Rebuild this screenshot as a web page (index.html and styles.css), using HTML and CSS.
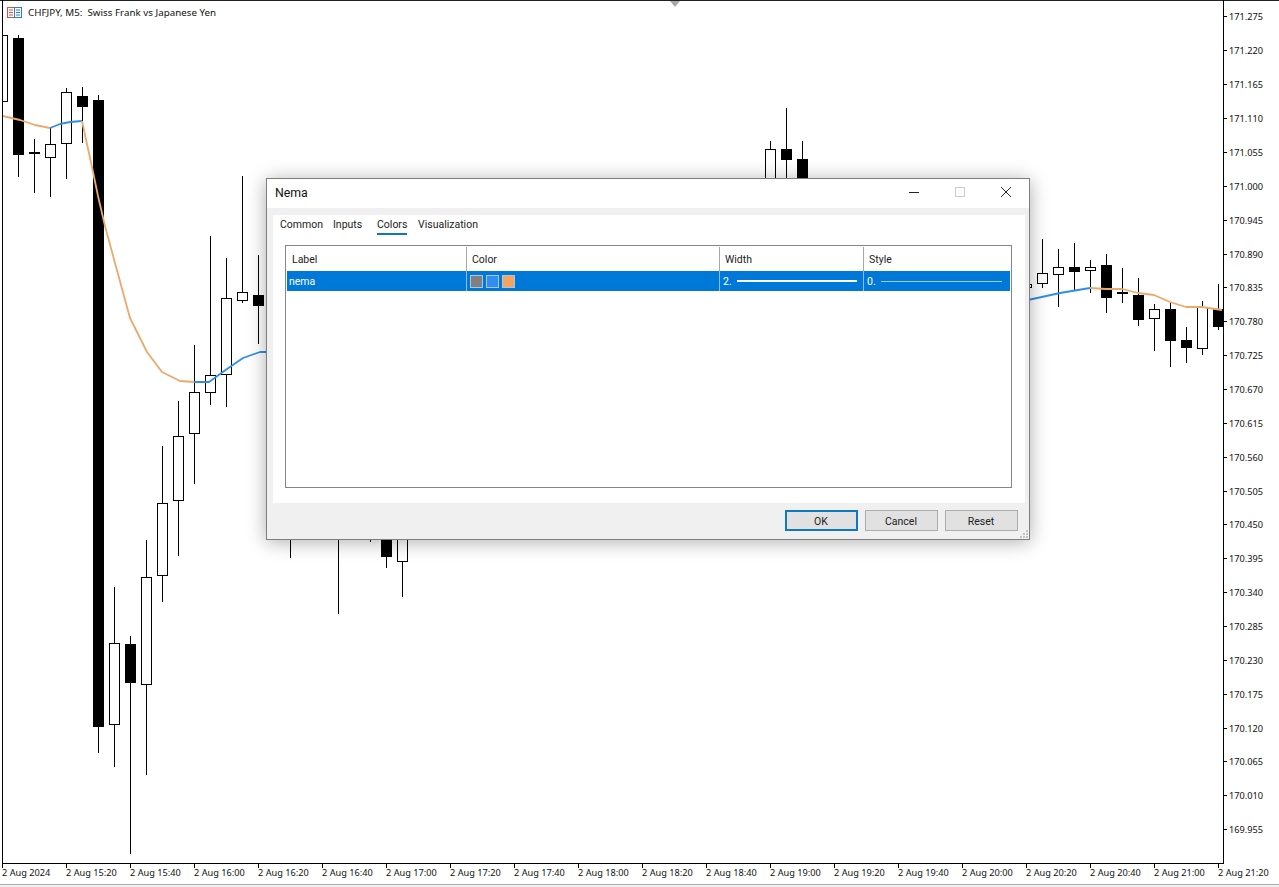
FILE: index.html
```html
<!DOCTYPE html>
<html lang="en">
<head>
<meta charset="utf-8">
<title>CHFJPY, M5 - Nema</title>
<link rel="stylesheet" href="styles.css">
</head>
<body>
<main class="terminal">
  <svg class="chart" width="1279" height="887" viewBox="0 0 1279 887" xmlns="http://www.w3.org/2000/svg">
    <rect class="frame-top" x="0" y="0" width="1279" height="1"/>
    <path class="marker" d="M670 1h10l-5 6z"/>

    <path class="wick" d="M18.5 35V177M34.5 139V193M50.5 128V197M66.5 88V179M82.5 87V143M98.5 95V753M114.5 587V767M130.5 636V854M146.5 540V775M162.5 446V602M178.5 401V556M194.5 345V484M210.5 236V405M226.5 258V407M242.5 176V303M258.5 255V344M290.5 500V558M338.5 500V614M370.5 500V542M386.5 500V568M402.5 500V597M770.5 141V200M786.5 108V200M802.5 141V200M1042.5 239V288M1058.5 249V307M1074.5 243V291M1090.5 260V293M1106.5 254V313M1122.5 268V303M1138.5 278V326M1154.5 304V351M1170.5 303V367M1186.5 327V363M1202.5 301V355M1218.5 284V330"/>

    <rect class="up" x="2.5" y="35.5" width="5" height="66"/>
    <rect class="up" x="45.5" y="144.5" width="10" height="13"/>
    <rect class="up" x="61.5" y="92.5" width="10" height="51"/>
    <rect class="up" x="109.5" y="643.5" width="10" height="81"/>
    <rect class="up" x="141.5" y="577.5" width="10" height="107"/>
    <rect class="up" x="157.5" y="503.5" width="10" height="72"/>
    <rect class="up" x="173.5" y="436.5" width="10" height="64"/>
    <rect class="up" x="189.5" y="392.5" width="10" height="41"/>
    <rect class="up" x="205.5" y="375.5" width="10" height="17"/>
    <rect class="up" x="221.5" y="298.5" width="10" height="76"/>
    <rect class="up" x="237.5" y="292.5" width="10" height="8"/>
    <rect class="up" x="397.5" y="500.5" width="10" height="61"/>
    <rect class="up" x="765.5" y="149.5" width="10" height="50"/>
    <rect class="up" x="1025.5" y="284.5" width="6" height="3"/>
    <rect class="up" x="1037.5" y="273.5" width="10" height="10"/>
    <rect class="up" x="1053.5" y="267.5" width="10" height="7"/>
    <rect class="up" x="1085.5" y="267.5" width="10" height="3"/>
    <rect class="up" x="1149.5" y="309.5" width="10" height="9"/>
    <rect class="up" x="1197.5" y="307.5" width="10" height="41"/>

    <rect class="down" x="13" y="38" width="11" height="117"/>
    <rect class="down" x="29" y="152" width="11" height="2"/>
    <rect class="down" x="77" y="96" width="11" height="11"/>
    <rect class="down" x="93" y="100" width="11" height="627"/>
    <rect class="down" x="125" y="644" width="11" height="39"/>
    <rect class="down" x="253" y="295" width="11" height="11"/>
    <rect class="down" x="381" y="500" width="11" height="57"/>
    <rect class="down" x="781" y="149" width="11" height="11"/>
    <rect class="down" x="797" y="159" width="11" height="41"/>
    <rect class="down" x="1069" y="267" width="11" height="5"/>
    <rect class="down" x="1101" y="265" width="11" height="33"/>
    <rect class="down" x="1117" y="292" width="11" height="2"/>
    <rect class="down" x="1133" y="295" width="11" height="25"/>
    <rect class="down" x="1165" y="309" width="11" height="32"/>
    <rect class="down" x="1181" y="340" width="11" height="8"/>
    <rect class="down" x="1213" y="309" width="10" height="18"/>

    <polyline class="nema-down" points="3,116 20,120 35,125 50,128"/>
    <polyline class="nema-up" points="50,128 60,124 70,122 82,121"/>
    <polyline class="nema-down" points="82,121 92,167 98,196 105,226 115,263 130,318 147,352 162,372 180,381 194,382"/>
    <polyline class="nema-up" points="194,382 209,382 227,369 243,358 260,352 270,352"/>
    <polyline class="nema-up" points="1028,300 1060,293 1090,288"/>
    <polyline class="nema-down" points="1090,288 1106,289 1122,289 1138,293 1154,295 1170,302 1186,307 1202,307 1222,310"/>

    <path class="axis" d="M2.5 0V863.5M1223.5 0V863.5M2 863.5H1224"/>
    <path class="axis" d="M1223 16.5h4M1223 50.5h4M1223 84.5h4M1223 118.5h4M1223 152.5h4M1223 186.5h4M1223 220.5h4M1223 254.5h4M1223 287.5h4M1223 321.5h4M1223 355.5h4M1223 389.5h4M1223 423.5h4M1223 457.5h4M1223 491.5h4M1223 524.5h4M1223 558.5h4M1223 592.5h4M1223 626.5h4M1223 660.5h4M1223 694.5h4M1223 728.5h4M1223 761.5h4M1223 795.5h4M1223 829.5h4"/>
    <path class="axis" d="M2.5 864v4M66.5 864v4M130.5 864v4M194.5 864v4M258.5 864v4M322.5 864v4M386.5 864v4M450.5 864v4M514.5 864v4M578.5 864v4M642.5 864v4M706.5 864v4M770.5 864v4M834.5 864v4M898.5 864v4M962.5 864v4M1026.5 864v4M1090.5 864v4M1154.5 864v4M1218.5 864v4"/>

    <g class="label">
      <text x="1229" y="20">171.275</text><text x="1229" y="54">171.220</text><text x="1229" y="88">171.165</text><text x="1229" y="122">171.110</text><text x="1229" y="156">171.055</text><text x="1229" y="190">171.000</text><text x="1229" y="224">170.945</text><text x="1229" y="258">170.890</text><text x="1229" y="291">170.835</text><text x="1229" y="325">170.780</text><text x="1229" y="359">170.725</text><text x="1229" y="393">170.670</text><text x="1229" y="427">170.615</text><text x="1229" y="461">170.560</text><text x="1229" y="495">170.505</text><text x="1229" y="528">170.450</text><text x="1229" y="562">170.395</text><text x="1229" y="596">170.340</text><text x="1229" y="630">170.285</text><text x="1229" y="664">170.230</text><text x="1229" y="698">170.175</text><text x="1229" y="732">170.120</text><text x="1229" y="765">170.065</text><text x="1229" y="799">170.010</text><text x="1229" y="833">169.955</text>
      <text x="2" y="876">2 Aug 2024</text><text x="66" y="876">2 Aug 15:20</text><text x="130" y="876">2 Aug 15:40</text><text x="194" y="876">2 Aug 16:00</text><text x="258" y="876">2 Aug 16:20</text><text x="322" y="876">2 Aug 16:40</text><text x="386" y="876">2 Aug 17:00</text><text x="450" y="876">2 Aug 17:20</text><text x="514" y="876">2 Aug 17:40</text><text x="578" y="876">2 Aug 18:00</text><text x="642" y="876">2 Aug 18:20</text><text x="706" y="876">2 Aug 18:40</text><text x="770" y="876">2 Aug 19:00</text><text x="834" y="876">2 Aug 19:20</text><text x="898" y="876">2 Aug 19:40</text><text x="962" y="876">2 Aug 20:00</text><text x="1026" y="876">2 Aug 20:20</text><text x="1090" y="876">2 Aug 20:40</text><text x="1154" y="876">2 Aug 21:00</text><text x="1218" y="876">2 Aug 21:20</text>
    </g>

    <g class="chart-icon">
      <rect class="icon-red" x="7.5" y="7.5" width="7" height="10"/>
      <rect class="icon-blue" x="14.5" y="7.5" width="7" height="10"/>
      <path class="icon-red" d="M9 10h4M9 12.500h4M9 15h4"/>
      <path class="icon-blue" d="M16 10h4M16 12.500h4M16 15h4"/>
    </g>
    <text class="chart-title" x="28" y="16">CHFJPY, M5:  Swiss Frank vs Japanese Yen</text>

    <rect class="status-line" x="0" y="884" width="1279" height="1"/>
    <rect class="status-bar" x="0" y="885" width="1279" height="2"/>
  </svg>

  <section class="dialog" aria-label="Nema">
    <header class="titlebar">
      <span class="title">Nema</span>
      <div class="window-controls">
        <svg width="12" height="12" viewBox="0 0 12 12"><path class="ctl" d="M1 6.500h10"/></svg>
        <svg width="12" height="12" viewBox="0 0 12 12"><rect class="ctl-off" x="1.500" y="1.500" width="9" height="9"/></svg>
        <svg width="12" height="12" viewBox="0 0 12 12"><path class="ctl" d="M1 1l10 10M11 1L1 11"/></svg>
      </div>
    </header>
    <div class="dialog-body">
      <div class="panel">
        <nav class="tabs">
          <span class="tab">Common</span>
          <span class="tab">Inputs</span>
          <span class="tab tab-active">Colors</span>
          <span class="tab">Visualization</span>
        </nav>
        <div class="table">
          <div class="row head">
            <div class="cell">Label</div>
            <div class="cell">Color</div>
            <div class="cell">Width</div>
            <div class="cell">Style</div>
          </div>
          <div class="row selected">
            <div class="cell">nema</div>
            <div class="cell swatches">
              <span class="swatch swatch-gray"></span>
              <span class="swatch swatch-blue"></span>
              <span class="swatch swatch-orange"></span>
            </div>
            <div class="cell sample"><span class="sample-value">2.</span><i class="line-thick"></i></div>
            <div class="cell sample"><span class="sample-value">0.</span><i class="line-thin"></i></div>
          </div>
        </div>
      </div>
      <footer class="buttons">
        <button class="btn btn-default" type="button">OK</button>
        <button class="btn" type="button">Cancel</button>
        <button class="btn" type="button">Reset</button>
      </footer>
    </div>
    <svg class="grip" width="10" height="10" viewBox="0 0 10 10">
      <path d="M7 1h2v2H7zM4 4h2v2H4zM7 4h2v2H7zM1 7h2v2H1zM4 7h2v2H4zM7 7h2v2H7z"/>
    </svg>
  </section>
</main>
</body>
</html>
```

FILE: styles.css
```css
* { box-sizing: border-box; }

html, body {
  margin: 0;
  padding: 0;
  background: #fff;
}

.terminal {
  position: relative;
  width: 1279px;
  height: 887px;
  overflow: hidden;
  background: #fff;
}

/* Chart canvas */
.chart { display: block; }
.frame-top { fill: #222; }
.marker { fill: #a8a8a8; }
.wick { fill: none; stroke: #000; stroke-width: 1; shape-rendering: crispEdges; }
.up { fill: #fff; stroke: #000; stroke-width: 1; shape-rendering: crispEdges; }
.down { fill: #000; shape-rendering: crispEdges; }
.nema-down, .nema-up { fill: none; stroke-width: 1.8; stroke-linejoin: round; }
.nema-down { stroke: #eba96c; }
.nema-up { stroke: #2f8fe6; }
.axis { fill: none; stroke: #000; stroke-width: 1; shape-rendering: crispEdges; }
.label text, .chart-title {
  font-family: "Noto Sans", "Liberation Sans", sans-serif;
  font-size: 9.2px;
  fill: #111;
}
.chart-title { font-size: 9.8px; white-space: pre; }
.chart-icon rect { fill: #fff; stroke-width: 1; }
.chart-icon path { fill: none; stroke-width: 1; }
.icon-red { stroke: #d0524c; }
.icon-blue { stroke: #2f7fc4; }
.status-line { fill: #ababab; }
.status-bar { fill: #f0f0f0; }

/* Dialog window */
.dialog {
  position: absolute;
  left: 266px;
  top: 178px;
  width: 764px;
  height: 362px;
  display: flex;
  flex-direction: column;
  border: 1px solid #7e7e7e;
  background: #f0f0f0;
  box-shadow: 0 2px 18px rgba(0, 0, 0, .32);
  font-family: Roboto, "Noto Sans", "Liberation Sans", sans-serif;
  font-size: 10.5px;
  color: #222;
}

.titlebar {
  flex: 0 0 29px;
  display: flex;
  align-items: center;
  justify-content: space-between;
  padding: 0 17px 3px 8px;
  background: #fff;
}
.title { font-size: 12.3px; color: #111; margin-top: 2px; }
.window-controls { display: flex; gap: 34px; }
.window-controls svg { display: block; }
.ctl { fill: none; stroke: #222; stroke-width: 1; }
.ctl-off { fill: none; stroke: #ccc; stroke-width: 1; }

.dialog-body {
  flex: 1;
  display: flex;
  flex-direction: column;
  padding: 7px 4px 0 6px;
  min-height: 0;
}

.panel {
  flex: 0 0 288px;
  display: flex;
  flex-direction: column;
  background: #fff;
  padding: 0 13px 15px 12px;
}

.tabs {
  flex: 0 0 20px;
  display: grid;
  grid-template-columns: 53px 44px 41px auto;
  justify-items: start;
  margin-left: -5px;
}
.tab {
  height: 20px;
  line-height: 20px;
}
.tab-active {
  border-bottom: 2px solid #0e7ab5;
}

.table {
  flex: 1;
  margin-top: 10px;
  border: 1px solid #868686;
  padding: 0 1px;
}
.row {
  display: grid;
  grid-template-columns: 179px 253px 144px 1fr;
}
.head {
  height: 25px;
  padding-top: 1px;
  grid-template-rows: 24px;
}
.head .cell {
  line-height: 26px;
  padding-left: 5px;
  border-left: 1px solid #a8a8a8;
}
.head .cell:first-child { border-left: 0; }
.selected {
  height: 20px;
  grid-template-rows: 20px;
  background: #0078d7;
  color: #fff;
}
.selected .cell {
  line-height: 22px;
  padding-left: 3px;
  border-left: 1px solid #8fbfe6;
}
.selected .cell:first-child { border-left: 0; padding-left: 2px; }
.cell { min-width: 0; }

.swatches {
  display: flex;
  align-items: center;
  gap: 3px;
}
.swatch {
  width: 13px;
  height: 13px;
  border: 1px solid #a9c6de;
}
.swatch-gray { background: #808080; }
.swatch-blue { background: #2f8ef0; }
.swatch-orange { background: #f4a460; }

.sample {
  display: flex;
  align-items: center;
  padding-right: 6px;
}
.sample:last-child { padding-right: 8px; }
.sample-value {
  flex: 0 0 14px;
  line-height: 18px;
  margin-top: 2px;
}
.line-thick, .line-thin { flex: 1; display: block; }
.line-thick { height: 2px; background: #fff; }
.line-thin { height: 1px; background: #a7cdec; }

.buttons {
  flex: 1;
  display: flex;
  justify-content: flex-end;
  align-items: flex-start;
  gap: 7px;
  padding: 7px 7px 0 0;
}
.btn {
  width: 73px;
  height: 21px;
  padding: 2px 1px 0 0;
  border: 1px solid #adadad;
  background: #e1e1e1;
  font: inherit;
  color: #222;
}
.btn-default {
  border: 2px solid #0f78c2;
}

.grip {
  position: absolute;
  right: 0;
  bottom: 0;
}
.grip path { fill: #c4c4c4; }
```
